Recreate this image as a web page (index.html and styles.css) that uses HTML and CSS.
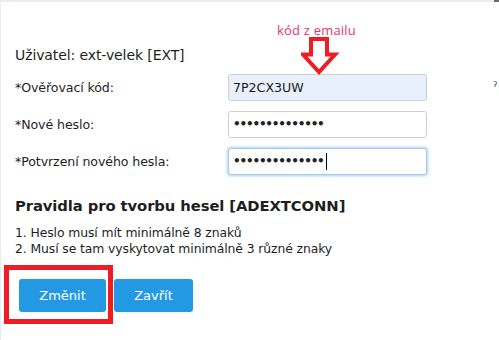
FILE: index.html
```html
<!DOCTYPE html>
<html lang="cs">
<head>
<meta charset="utf-8">
<link rel="stylesheet" href="styles.css">
</head>
<body>
<div class="panel">
  <div class="note">
    <span class="note-text">kód z emailu</span>
    <svg class="arrow" width="40" height="40" viewBox="0 0 40 40">
      <polygon points="10,3 26,3 26,18.5 34,18.5 18,36 2,18.5 10,18.5" fill="none" stroke="#ee1c25" stroke-width="4" stroke-linejoin="miter"/>
    </svg>
  </div>
  <div class="user">Uživatel: ext-velek [EXT]</div>
  <div class="form">
    <label class="lbl">*Ověřovací kód:</label>
    <div class="field autofill">7P2CX3UW</div>
    <label class="lbl">*Nové heslo:</label>
    <div class="field pwd">••••••••••••••</div>
    <label class="lbl">*Potvrzení nového hesla:</label>
    <div class="field pwd focus">••••••••••••••<span class="caret"></span></div>
  </div>
  <h2 class="rules-title">Pravidla pro tvorbu hesel [ADEXTCONN]</h2>
  <div class="rules">
    <div>1. Heslo musí mít minimálně 8 znaků</div>
    <div>2. Musí se tam vyskytovat minimálně 3 různé znaky</div>
  </div>
  <div class="buttons">
    <div class="highlight">
      <button class="btn">Změnit</button>
    </div>
    <button class="btn btn-close">Zavřít</button>
  </div>
  <span class="cut">ˀ</span>
  <span class="corner"></span>
</div>
</body>
</html>
```
FILE: styles.css
```css
html, body {
  margin: 0;
  padding: 0;
}
body {
  background: #e9edf2;
  width: 499px;
  height: 340px;
  overflow: hidden;
  font-family: "DejaVu Sans", Verdana, sans-serif;
  color: #1e1e1e;
}
.panel {
  position: relative;
  margin: 2px 0 0 1px;
  height: 338px;
  background: #fff;
  padding: 0 0 0 14px;
  box-sizing: border-box;
}
.note {
  position: absolute;
  left: 276px;
  top: 20px;
  width: 90px;
}
.note-text {
  display: block;
  font-family: "Open Sans", sans-serif;
  font-size: 13px;
  color: #f0326c;
  letter-spacing: 0.2px;
  line-height: 16px;
}
.arrow {
  position: absolute;
  left: 24px;
  top: 14px;
}
.user {
  padding-top: 44px;
  font-size: 14px;
  line-height: 18px;
  letter-spacing: -0.1px;
}
.form {
  display: grid;
  grid-template-columns: 213px 199px;
  row-gap: 10px;
  margin-top: 10px;
  align-items: center;
}
.lbl {
  font-size: 12.6px;
  letter-spacing: -0.1px;
}
.field {
  height: 27px;
  box-sizing: border-box;
  border: 1px solid #cfcfcf;
  border-radius: 3px;
  padding: 0 4px;
  font-size: 12.6px;
  line-height: 25px;
  display: flex;
  align-items: center;
  background: #fff;
}
.autofill {
  background: #e8f0fe;
  color: #1a1a1a;
}
.pwd {
  font-size: 12px;
  font-weight: bold;
  letter-spacing: -1.2px;
  color: #222;
}
.focus {
  border-color: #a7cdee;
  box-shadow: 0 0 3px 1px rgba(102, 170, 230, 0.55);
}
.caret {
  display: inline-block;
  width: 1px;
  height: 17px;
  background: #000;
  margin-left: 2px;
}
.rules-title {
  margin: 22px 0 0;
  font-size: 14.8px;
  font-weight: bold;
  line-height: 18px;
  letter-spacing: -0.1px;
}
.rules {
  margin-top: 10px;
  font-size: 12.4px;
  line-height: 16px;
  letter-spacing: -0.1px;
}
.buttons {
  display: flex;
  align-items: flex-start;
  margin-top: 8px;
  margin-left: -11px;
}
.highlight {
  border: 5px solid #ee1c25;
  padding: 9px 2px 7px 10px;
}
.btn {
  width: 87px;
  height: 33px;
  border: 0;
  border-radius: 3px;
  background: #2499e3;
  color: #fff;
  font-family: "DejaVu Sans", Verdana, sans-serif;
  font-size: 13px;
  padding: 0;
}
.btn-close {
  width: 79px;
  margin-left: 1px;
  margin-top: 14px;
}
.cut {
  position: absolute;
  left: 492px;
  top: 78px;
  font-size: 12px;
  color: #333;
}
.corner {
  position: absolute;
  right: 0;
  top: -2px;
  width: 5px;
  height: 2px;
  background: #6b6b6b;
}
```
